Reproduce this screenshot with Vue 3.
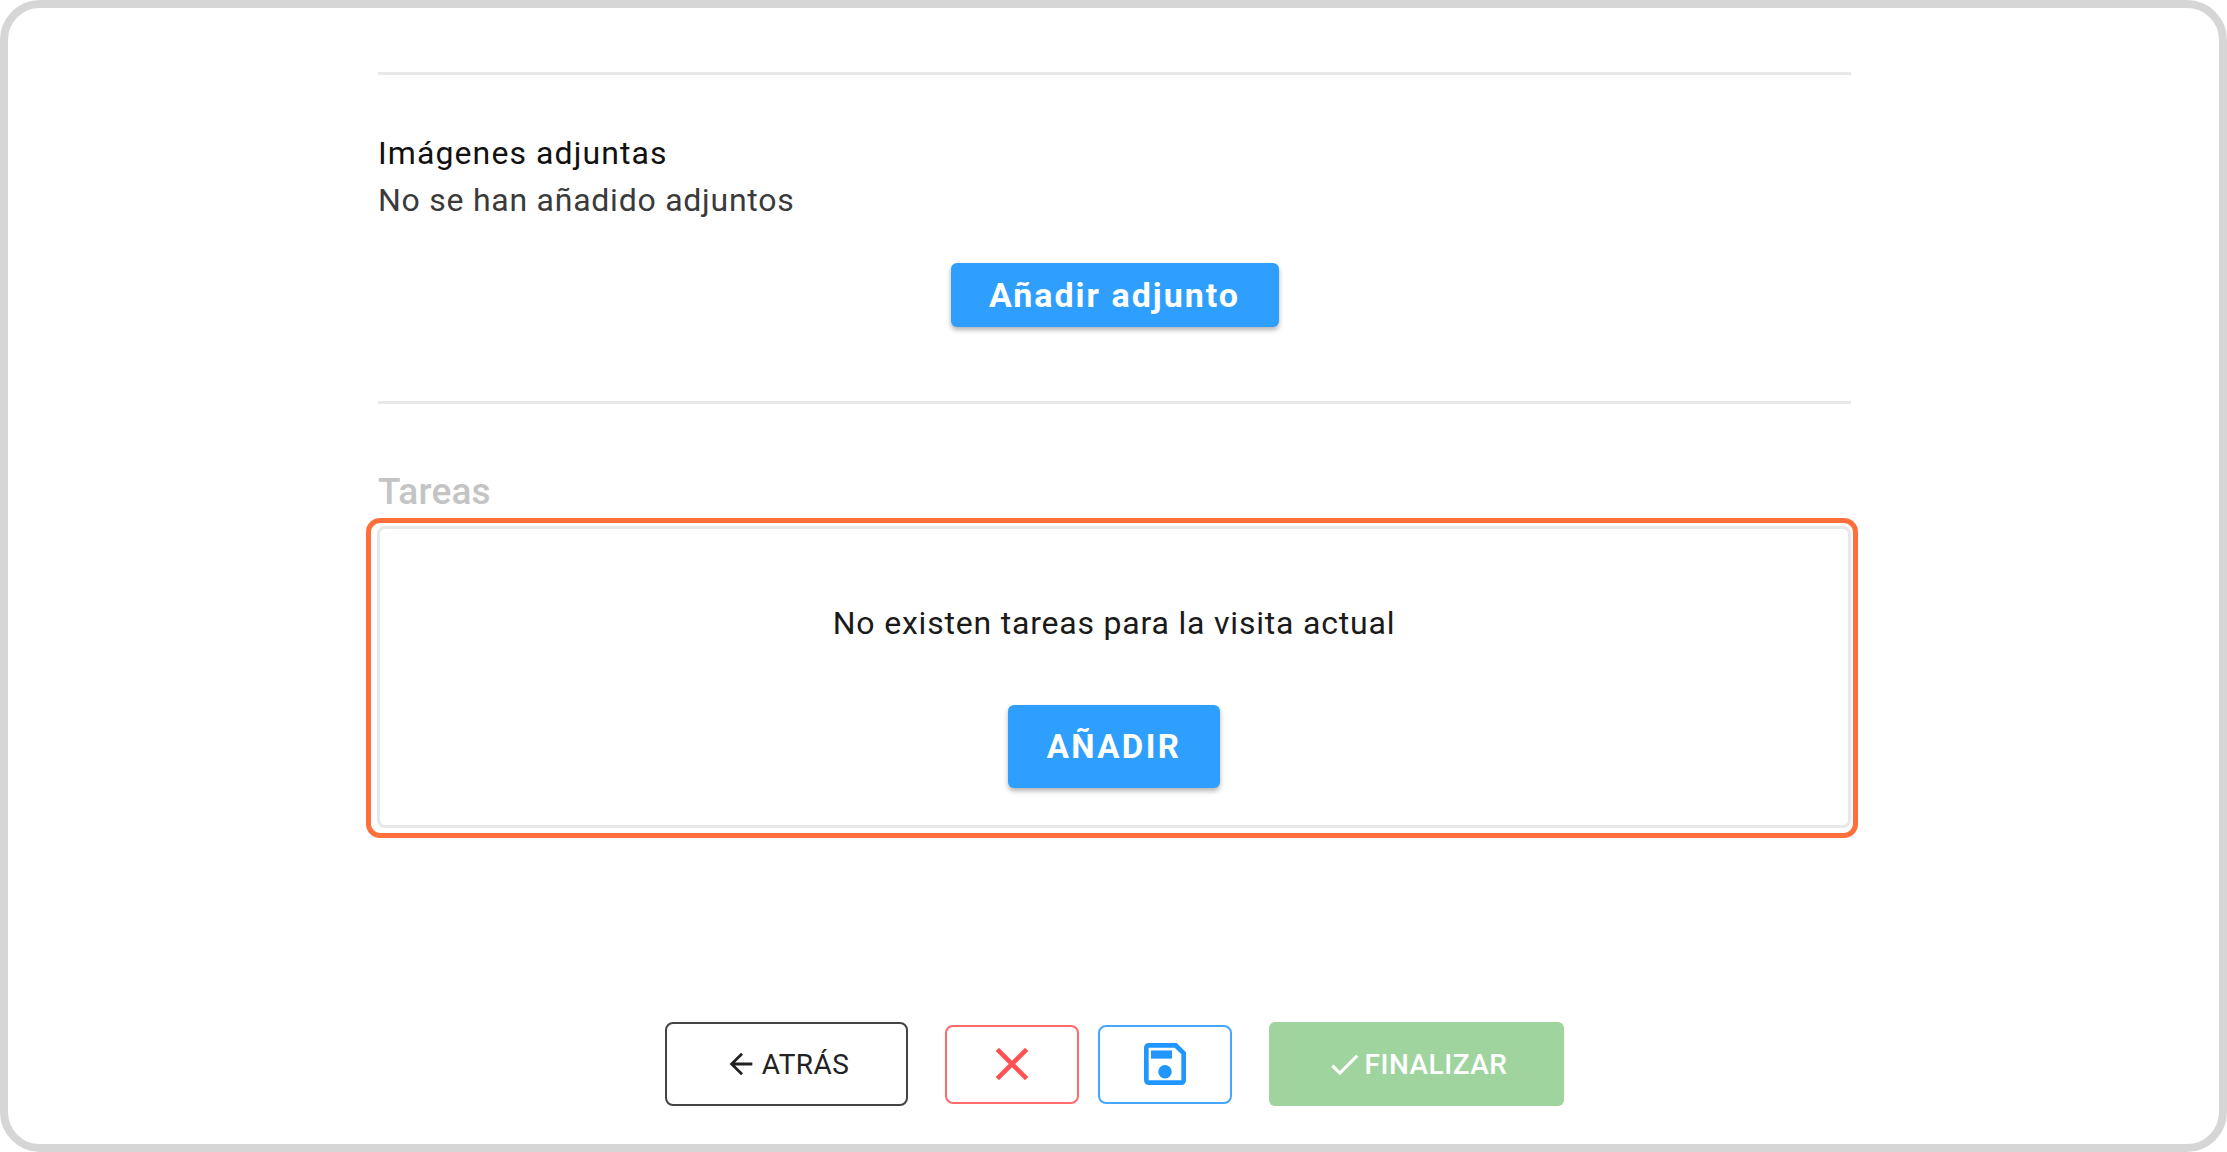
<template>
  <div class="frame">
    <div class="content">
      <hr class="divider first" />

      <section class="attachments">
        <h3 class="att-title">Imágenes adjuntas</h3>
        <p class="att-empty">No se han añadido adjuntos</p>
        <div class="att-action">
          <button class="btn-primary btn-attach">Añadir adjunto</button>
        </div>
      </section>

      <hr class="divider" />

      <h2 class="tasks-title">Tareas</h2>
      <div class="highlight">
        <div class="tasks-card">
          <p class="tasks-empty">No existen tareas para la visita actual</p>
          <button class="btn-primary btn-add">AÑADIR</button>
        </div>
      </div>
    </div>

    <footer class="actions">
      <button class="btn-back">
        <svg class="ico-back" viewBox="0 0 24 24"><path d="M20 11H7.83l5.59-5.59L12 4l-8 8 8 8 1.41-1.41L7.83 13H20v-2z" /></svg>
        ATRÁS
      </button>
      <div class="icon-btns">
        <button class="btn-icon cancel">
          <svg viewBox="0 0 24 24"><path d="M19 6.41 17.59 5 12 10.59 6.41 5 5 6.41 10.59 12 5 17.59 6.41 19 12 13.41 17.59 19 19 17.59 13.41 12z" /></svg>
        </button>
        <button class="btn-icon save">
          <svg viewBox="0 0 24 24">
            <path fill-rule="evenodd" d="M17 3H5a2 2 0 0 0-2 2v14a2 2 0 0 0 2 2h14a2 2 0 0 0 2-2V7l-4-4zm2 16H5V5h11.17L19 7.83V19z" />
            <rect x="6" y="6.2" width="9" height="3.5" />
            <circle cx="12" cy="15.3" r="2.9" />
          </svg>
        </button>
      </div>
      <button class="btn-finish">
        <svg class="ico-check" viewBox="0 0 24 24"><path d="M9 16.17 4.83 12l-1.42 1.41L9 19 21 7l-1.41-1.41z" /></svg>
        FINALIZAR
      </button>
    </footer>
  </div>
</template>

<script setup>
</script>

<style>
html, body {
  margin: 0;
  background: #fff;
}
</style>

<style scoped>
.frame {
  box-sizing: border-box;
  width: 2227px;
  height: 1152px;
  border: 8px solid #d6d6d6;
  border-radius: 40px;
  background: #fff;
  display: flex;
  flex-direction: column;
  align-items: center;
  font-family: Roboto, "Liberation Sans", sans-serif;
  overflow: hidden;
}
.content {
  width: 1473px;
  margin-left: 2px;
  display: flex;
  flex-direction: column;
}
.divider {
  border: 0;
  height: 3px;
  margin: 0;
  background: #e8e8e8;
}
.divider.first {
  margin-top: 64px;
}
.attachments {
  height: 326px;
  box-sizing: border-box;
  padding-top: 56px;
}
.att-title {
  margin: 0;
  font-size: 32px;
  line-height: 45px;
  font-weight: 400;
  letter-spacing: 1.1px;
  color: #111;
}
.att-empty {
  margin: 0;
  font-size: 32px;
  line-height: 48px;
  letter-spacing: 0.75px;
  color: #3a3a3a;
}
.att-action {
  display: flex;
  justify-content: center;
  margin-top: 39px;
}
.btn-primary {
  border: 0;
  border-radius: 6px;
  background: #2e9fff;
  color: #fff;
  font-family: inherit;
  font-weight: 700;
  box-shadow: 0 3px 5px rgba(0, 0, 0, 0.3);
}
.btn-attach {
  width: 328px;
  height: 64px;
  font-size: 34px;
  letter-spacing: 2px;
}
.tasks-title {
  margin: 66px 0 0;
  font-size: 37px;
  line-height: 44px;
  font-weight: 500;
  letter-spacing: 0.2px;
  color: #c4c4c4;
}
.highlight {
  margin: 4px -7px 0 -12px;
  border: 5px solid #ff6f3c;
  border-radius: 14px;
  padding: 3px 2px 5px 6px;
  height: 320px;
  box-sizing: border-box;
}
.tasks-card {
  box-sizing: border-box;
  height: 100%;
  border: 3px solid #e8e8e8;
  border-radius: 8px;
  display: flex;
  flex-direction: column;
  align-items: center;
  padding-top: 74px;
}
.tasks-empty {
  margin: 0;
  font-size: 32px;
  line-height: 40px;
  letter-spacing: 0.8px;
  color: #1a1a1a;
}
.btn-add {
  margin-top: 62px;
  width: 212px;
  height: 83px;
  font-size: 33px;
  letter-spacing: 2.4px;
}
.actions {
  margin-top: auto;
  margin-bottom: 38px;
  margin-left: 2px;
  display: flex;
  align-items: center;
  gap: 37px;
}
.btn-back {
  box-sizing: border-box;
  width: 243px;
  height: 84px;
  border: 2px solid #444;
  border-radius: 8px;
  background: #fff;
  color: #222;
  font-family: inherit;
  font-size: 28px;
  font-weight: 400;
  letter-spacing: 0.4px;
  display: flex;
  align-items: center;
  justify-content: center;
  gap: 4px;
}
.ico-back {
  width: 34px;
  height: 34px;
  fill: #222;
}
.icon-btns {
  display: flex;
  gap: 19px;
}
.btn-icon {
  box-sizing: border-box;
  width: 134px;
  height: 79px;
  border-width: 2px;
  border-style: solid;
  border-radius: 8px;
  background: #fff;
  padding: 0;
  display: flex;
  align-items: center;
  justify-content: center;
}
.btn-icon svg {
  width: 56px;
  height: 56px;
}
.btn-icon.cancel {
  border-color: #ff6b6b;
}
.btn-icon.cancel svg {
  fill: #ff5252;
}
.btn-icon.save {
  border-color: #45a5ff;
}
.btn-icon.save svg {
  fill: #2196ff;
}
.btn-finish {
  box-sizing: border-box;
  width: 295px;
  height: 84px;
  border: 0;
  border-radius: 6px;
  background: #9fd49f;
  color: #fff;
  font-family: inherit;
  font-size: 28px;
  font-weight: 500;
  letter-spacing: 0.5px;
  display: flex;
  align-items: center;
  justify-content: center;
  gap: 2px;
}
.ico-check {
  width: 37px;
  height: 37px;
  fill: #fff;
}
</style>
